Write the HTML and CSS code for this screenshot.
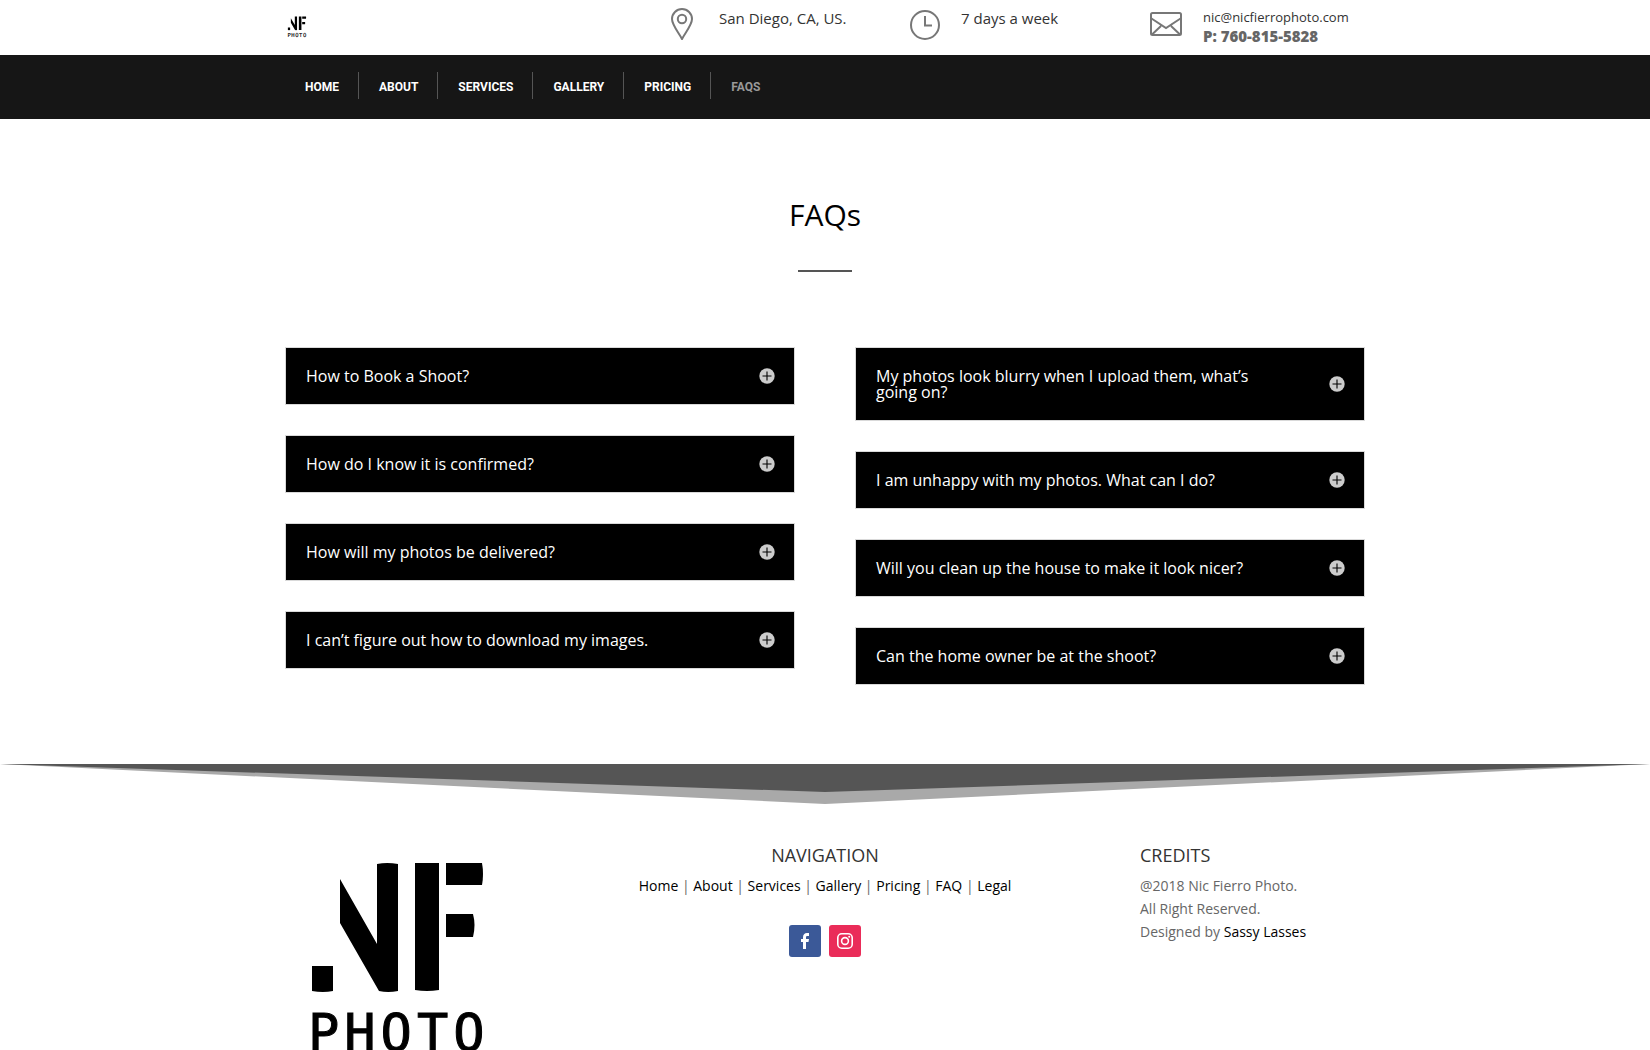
FILE: index.html
```html
<!DOCTYPE html>
<html lang="en-US">
<head>
    <meta charset="UTF-8">
    <meta name="viewport" content="width=device-width, initial-scale=1.0">
    <title>FAQs | Nic Fierro Photo</title>
    <link rel="stylesheet" href="styles.css">
</head>
<body>
    <!-- shared shapes -->
    <svg class="sprite" aria-hidden="true">
        <symbol id="logo" viewBox="0 0 225 225">
            <path d="M27 126h21v25q-10 2-21 0z"/>
            <path d="M55 39L92 104V24q10-2 21 0v127q-10 2-19 0L55 83z"/>
            <path d="M130 23h24v127q-12 2-24 0z"/>
            <path d="M161 23h36q2 11 0 22h-36z"/>
            <path d="M161 74h27q3 11 0 23h-27z"/>
            <text class="logo-word" x="23" y="211">PHOTO</text>
        </symbol>
        <symbol id="plus" viewBox="0 0 16 16">
            <circle cx="8" cy="8" r="7.7" fill="#ccc"/>
            <path d="M8 3.5v9M3.5 8h9" stroke="#000" stroke-width="1.1"/>
        </symbol>
    </svg>

    <header class="top-header">
        <div class="container top-row">
            <a class="logo-link" href="#" aria-label="Nic Fierro Photo"><svg class="logo-small"><use href="#logo"/></svg></a>
            <div class="contact">
                <div class="contact-item">
                    <svg class="contact-icon" viewBox="0 0 32 32">
                        <path d="M16 31C13 25 6 17 6 11a10 10 0 0 1 20 0c0 6-7 14-10 20z"/>
                        <circle cx="16" cy="11" r="4.2"/>
                    </svg>
                    <p class="contact-text">San Diego, CA, US.</p>
                </div>
                <div class="contact-item">
                    <svg class="contact-icon" viewBox="0 0 32 32">
                        <circle cx="17" cy="17" r="14"/>
                        <path d="M17 8v9.500h7"/>
                    </svg>
                    <p class="contact-text">7 days a week</p>
                </div>
                <div class="contact-item">
                    <svg class="contact-icon" viewBox="0 0 32 32">
                        <rect x="1" y="5" width="30" height="22" rx="1.500"/>
                        <path d="M1.500 10.500L16 20l14.500-9.500M2 26.500l9-8.500M30 26.500L21 18"/>
                    </svg>
                    <div class="contact-text">
                        <a class="email" href="mailto:nic@nicfierrophoto.com">nic@nicfierrophoto.com</a>
                        <p class="phone">P: 760-815-5828</p>
                    </div>
                </div>
            </div>
        </div>
    </header>

    <nav class="main-nav">
        <ul class="container menu">
            <li><a href="#">HOME</a></li>
            <li><a href="#">ABOUT</a></li>
            <li><a href="#">SERVICES</a></li>
            <li><a href="#">GALLERY</a></li>
            <li><a href="#">PRICING</a></li>
            <li><a class="current" href="#">FAQS</a></li>
        </ul>
    </nav>

    <main class="container faq">
        <h1>FAQs</h1>
        <hr class="rule">
        <div class="faq-columns">
            <div class="faq-column">
                <button class="toggle" type="button">How to Book a Shoot?<svg><use href="#plus"/></svg></button>
                <button class="toggle" type="button">How do I know it is confirmed?<svg><use href="#plus"/></svg></button>
                <button class="toggle" type="button">How will my photos be delivered?<svg><use href="#plus"/></svg></button>
                <button class="toggle" type="button">I can’t figure out how to download my images.<svg><use href="#plus"/></svg></button>
            </div>
            <div class="faq-column">
                <button class="toggle" type="button">My photos look blurry when I upload them, what’s going on?<svg><use href="#plus"/></svg></button>
                <button class="toggle" type="button">I am unhappy with my photos. What can I do?<svg><use href="#plus"/></svg></button>
                <button class="toggle" type="button">Will you clean up the house to make it look nicer?<svg><use href="#plus"/></svg></button>
                <button class="toggle" type="button">Can the home owner be at the shoot?<svg><use href="#plus"/></svg></button>
            </div>
        </div>
    </main>

    <footer>
        <svg class="divider" viewBox="0 0 100 40" preserveAspectRatio="none" aria-hidden="true">
            <path d="M0 0h100L50 40z" fill="#a9a9a9"/>
            <path d="M0 0h100L50 28z" fill="#555"/>
        </svg>
        <div class="container footer-columns">
            <svg class="logo-large" viewBox="0 0 225 225" role="img" aria-label="NF Photo"><use href="#logo"/></svg>
            <div class="footer-nav">
                <h2>NAVIGATION</h2>
                <p><a href="#">Home</a> | <a href="#">About</a> | <a href="#">Services</a> | <a href="#">Gallery</a> | <a href="#">Pricing</a> | <a href="#">FAQ</a> | <a href="#">Legal</a></p>
                <div class="social">
                    <a class="facebook" href="#" aria-label="Facebook">
                        <svg viewBox="0 0 16 16"><path d="M6 16V9H4V6h2V4.500C6 1.500 7.500 0 10 0h2v3h-1.500C9.500 3 9 3.400 9 4.300V6h3l-.5 3H9v7z"/></svg>
                    </a>
                    <a class="instagram" href="#" aria-label="Instagram">
                        <svg viewBox="0 0 16 16">
                            <rect class="line" x=".8" y=".8" width="14.400" height="14.400" rx="4"/>
                            <circle class="line" cx="8" cy="8" r="3.400"/>
                            <circle cx="12.200" cy="3.800" r="1"/>
                        </svg>
                    </a>
                </div>
            </div>
            <div class="credits">
                <h2>CREDITS</h2>
                <p>@2018 Nic Fierro Photo.<br>All Right Reserved.<br>Designed by <a href="#">Sassy Lasses</a></p>
            </div>
        </div>
    </footer>
</body>
</html>
```
FILE: styles.css
```css
* {
    box-sizing: border-box;
}

body {
    margin: 0;
    font-family: "Open Sans", Arial, sans-serif;
    font-size: 14px;
    line-height: 23px;
    color: #666;
    background-color: #fff;
}

h1, h2, p, ul {
    margin: 0;
    padding: 0;
    font-weight: 400;
}

a {
    color: #000;
    text-decoration: none;
}

.sprite {
    position: absolute;
    width: 0;
    height: 0;
}

.container {
    width: 90%;
    max-width: 1080px;
    margin: 0 auto;
}

/* header */
.top-row {
    display: flex;
    justify-content: space-between;
    height: 55px;
}

.logo-link {
    padding-top: 14px;
}

.logo-small {
    display: block;
    width: 24px;
    height: 24px;
}

.logo-word {
    font-family: "DejaVu Sans Mono", monospace;
    font-size: 52px;
    letter-spacing: 5px;
    stroke: #000;
    stroke-width: 1px;
}

.contact {
    display: grid;
    grid-template-columns: repeat(3, 215px);
    gap: 27px;
    padding-top: 8px;
}

.contact-item {
    display: flex;
    gap: 21px;
}

.contact-icon {
    flex: none;
    width: 32px;
    height: 32px;
    fill: none;
    stroke: #777;
    stroke-width: 2;
}

.contact-text {
    font-size: 15px;
    line-height: 20px;
    color: #333;
}

.email {
    display: block;
    font-size: 13px;
    line-height: 18px;
    color: #333;
}

.phone {
    font-weight: 800;
    color: #666;
}

/* menu */
.main-nav {
    background-color: #161616;
}

.menu {
    display: flex;
    height: 64px;
    padding-top: 17px;
    list-style: none;
}

.menu li {
    height: 27px;
    padding: 0 19px 0 20px;
    border-right: 1px solid #555;
}

.menu li:last-child {
    border-right: 0;
}

.menu a {
    font-family: Roboto, sans-serif;
    font-size: 12px;
    font-weight: 700;
    line-height: 30px;
    color: #fff;
}

.menu .current {
    color: #999;
}

/* questions */
.faq {
    padding: 76px 0 79px;
}

.faq h1 {
    font-size: 30px;
    line-height: 40px;
    text-align: center;
    color: #000;
}

.rule {
    width: 54px;
    height: 2px;
    margin: 35px auto 75px;
    border: 0;
    background-color: #555;
}

.faq-columns {
    display: grid;
    grid-template-columns: 1fr 1fr;
    gap: 60px;
}

.faq-column {
    display: flex;
    flex-direction: column;
    gap: 30px;
}

.toggle {
    display: flex;
    align-items: center;
    justify-content: space-between;
    gap: 50px;
    padding: 20px 19px 20px 20px;
    border: 1px solid #d9d9d9;
    font-family: inherit;
    font-size: 16px;
    line-height: 16px;
    text-align: left;
    color: #fff;
    background-color: #000;
    cursor: pointer;
}

.toggle svg {
    flex: none;
    width: 16px;
    height: 16px;
}

/* footer */
.divider {
    display: block;
    width: 100%;
    height: 40px;
}

.footer-columns {
    display: grid;
    grid-template-columns: repeat(4, 1fr);
    gap: 60px;
    padding: 36px 0 30px;
}

.footer-columns h2 {
    margin-bottom: 4px;
    font-size: 18px;
    line-height: 30px;
    color: #333;
}

.logo-large {
    width: 100%;
}

.footer-nav {
    grid-column: span 2;
    text-align: center;
}

.social {
    display: flex;
    justify-content: center;
    gap: 8px;
    margin-top: 28px;
}

.social a {
    display: flex;
    align-items: center;
    justify-content: center;
    width: 32px;
    height: 32px;
    border-radius: 3px;
}

.social svg {
    width: 16px;
    height: 16px;
    fill: #fff;
}

.social .line {
    fill: none;
    stroke: #fff;
    stroke-width: 1.6;
}

.facebook {
    background-color: #3b5998;
}

.instagram {
    background-color: #ea2c59;
}
```
